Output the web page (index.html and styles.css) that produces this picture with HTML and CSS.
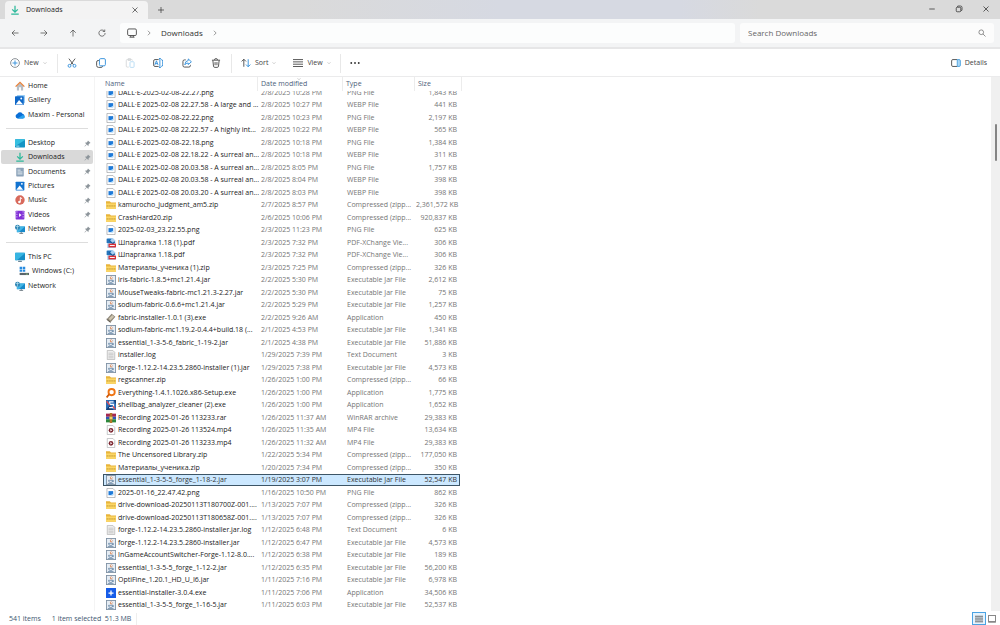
FILE: index.html
```
<!DOCTYPE html>
<html lang="en">
<head>
<meta charset="utf-8">
<title>Downloads</title>
<link rel="stylesheet" href="styles.css">
</head>
<body>
<svg class="sprite" aria-hidden="true">
  <defs>
    <symbol id="download" viewBox="0 0 16 16"><path d="M8 1v10M3.500 7 8 11.500 12.500 7M2 14.500h12" fill="none" stroke="#2bb89a" stroke-width="2"/></symbol>
    <symbol id="close" viewBox="0 0 16 16"><path d="m3 3 10 10M13 3 3 13" class="line"/></symbol>
    <symbol id="plus" viewBox="0 0 16 16"><path d="M8 2v12M2 8h12" class="line"/></symbol>
    <symbol id="minimize" viewBox="0 0 16 16"><path d="M2.500 8h11" class="line"/></symbol>
    <symbol id="restore" viewBox="0 0 16 16"><path d="M5 4V3q0-1 1-1h5q3 0 3 3v5q0 1-1 1h-1" class="line"/><rect x="2.500" y="4.500" width="9" height="9" rx="2" class="line"/></symbol>
    <symbol id="left" viewBox="0 0 16 16"><path d="M15 8H2M7.500 2.500 2 8l5.500 5.500" class="line"/></symbol>
    <symbol id="right" viewBox="0 0 16 16"><path d="M1 8h13M8.500 2.500 14 8l-5.500 5.500" class="line"/></symbol>
    <symbol id="up" viewBox="0 0 16 16"><path d="M8 15V2M2.500 7.500 8 2l5.500 5.500" class="line"/></symbol>
    <symbol id="refresh" viewBox="0 0 16 16"><path d="M13 4.500A6.200 6.200 0 1 0 14.200 8M13.500 1v4h-4" class="line"/></symbol>
    <symbol id="monitor" viewBox="0 0 16 16"><rect x="1" y="1.500" width="14" height="10.500" rx="2" class="line"/><path d="M6 12v2.500M10 12v2.500M4 14.700h8" class="line"/></symbol>
    <symbol id="chevron" viewBox="0 0 16 16"><path d="m5 2 6 6-6 6" class="line"/></symbol>
    <symbol id="caret" viewBox="0 0 16 16"><path d="m2 5 6 6 6-6" class="line"/></symbol>
    <symbol id="search" viewBox="0 0 16 16"><circle cx="6.500" cy="6.500" r="4.700" class="line"/><path d="m10 10 5 5" class="line"/></symbol>
    <symbol id="new" viewBox="0 0 16 16"><circle cx="8" cy="8" r="7" fill="none" stroke="#7b8288" stroke-width="1.400"/><path d="M8 4v8M4 8h8" class="blue"/></symbol>
    <symbol id="cut" viewBox="0 0 16 16"><path d="m3 1 7.500 10M13 1 5.500 11" class="line"/><circle cx="4" cy="12.500" r="2.300" class="blue"/><circle cx="12" cy="12.500" r="2.300" class="blue"/></symbol>
    <symbol id="copy" viewBox="0 0 16 16"><path d="M5 4H3.500Q1 4 1 6.500V12q0 3 3 3h4q2.500 0 2.500-2" class="line"/><rect x="5.500" y="1" width="9.500" height="11.500" rx="2" class="blue"/></symbol>
    <symbol id="paste" viewBox="0 0 16 16"><path d="M6 14.500H3.500Q2 14.500 2 13V4q0-1.500 1.500-1.500h7Q12 2.500 12 4M5 1h4v3H5z" fill="none" stroke="#d2d4d6" stroke-width="1.300"/><rect x="8" y="6" width="6.500" height="9" rx="1" fill="none" stroke="#b9dcf3" stroke-width="1.500"/></symbol>
    <symbol id="rename" viewBox="0 0 16 16"><path d="M9 2.500H3Q1 2.500 1 5v6q0 2.500 2 2.500h6" class="line"/><path d="M13 2.500q2.500 0 2.500 2.500v6q0 2.500-2.500 2.500M9.500.8h3M9.500 15.200h3M11 1v14M3 11l2.500-6.500L8 11M4 9h3" class="blue"/></symbol>
    <symbol id="share" viewBox="0 0 16 16"><path d="M6 3H4Q1.500 3 1.500 5.500v6.500q0 2.500 2.500 2.500h7q2.500 0 2.500-2.500v-1" class="line"/><path d="M10 1.500 15 6l-5 4.500V8q-4 0-5.500 3Q5 4.500 10 4z" class="blue"/></symbol>
    <symbol id="trash" viewBox="0 0 16 16"><path d="M1.500 3.500h13M5.500 3q0-2 2.500-2t2.500 2M3 4l1 9q.2 2 2 2h4q1.800 0 2-2l1-9M6.500 6.500v5M9.500 6.500v5" class="line"/></symbol>
    <symbol id="sort" viewBox="0 0 16 16"><path d="M4.500 14V2M1 5.500 4.500 2 8 5.500" class="line"/><path d="M11.500 2v12M8 10.500l3.500 3.500 3.500-3.500" class="blue"/></symbol>
    <symbol id="lines" viewBox="0 0 16 16"><path d="M0 2.500h16M0 6.200h16M0 9.900h16M0 13.600h16" class="line"/></symbol>
    <symbol id="dots" viewBox="0 0 16 16"><g fill="#333"><circle cx="2" cy="8" r="1.500"/><circle cx="8" cy="8" r="1.500"/><circle cx="14" cy="8" r="1.500"/></g></symbol>
    <symbol id="details" viewBox="0 0 16 16"><path d="M10 2.500H3Q1 2.500 1 4.500v7q0 2 2 2h7" class="line"/><path d="M10 2.500h3q2 0 2 2v7q0 2-2 2h-3z" fill="#a9d7f6" stroke="#3f9bdc" stroke-width="1.300"/></symbol>
    <symbol id="pin" viewBox="0 0 16 16"><path d="m9 1 6 6-2 .5-2.500 2.500-.5 4-3.500-3.500L2 15l-1-1 4.500-4.500L2 6l4-.5L8.500 3z" fill="#8d959b"/></symbol>
    <symbol id="home" viewBox="0 0 16 16"><path d="M3 7.500 8 3l5 4.500V15h-3.500v-5h-3v5H3z" fill="#b7bec5"/><path d="M1 9 8 2.200 15 9" fill="none" stroke="#e8823a" stroke-width="2.200"/></symbol>
    <symbol id="gallery" viewBox="0 0 16 16"><rect x="3" y="0" width="13" height="13" rx="1" fill="#9acdf4"/><rect x="0" y="2" width="14" height="14" rx="1" fill="#0f68c9"/><path d="m1 15 5.500-7L13 15z" fill="#fff"/><circle cx="10" cy="5.500" r="1.500" fill="#fff"/></symbol>
    <symbol id="cloud" viewBox="0 0 16 16"><path d="M4 13.500a3.800 3.800 0 0 1-.5-7.300A5 5 0 0 1 12 5.800a4 4 0 0 1 .5 7.700z" fill="#0a6fd6"/><path d="M4 13.500 12.500 8q3 .5 3.300 3-.3 2.500-3.300 2.500z" fill="#29a2ee"/></symbol>
    <symbol id="desktop" viewBox="0 0 16 16"><rect x="0" y="2" width="16" height="13" rx="1" fill="#1494c4"/><path d="M1 2h14q1 0 1 1L0 13V3q0-1 1-1z" fill="#35bfe0"/><path d="M2 13h5" stroke="#d7f5ff" stroke-width="1.200"/></symbol>
    <symbol id="documents" viewBox="0 0 16 16"><rect x="2" y="1" width="12" height="14" rx="1" fill="#8ba2b8"/><path d="M4 5h5M4 8h8M4 11h8" stroke="#e8eff5" stroke-width="1.500"/></symbol>
    <symbol id="pictures" viewBox="0 0 16 16"><rect x="1" y="1" width="14" height="14" rx="1" fill="#1273d0"/><path d="m2 14 5.500-7L13 14z" fill="#fff"/><circle cx="11" cy="4.500" r="1.500" fill="#fff"/></symbol>
    <symbol id="music" viewBox="0 0 16 16"><circle cx="8" cy="8" r="7.500" fill="#d8695b"/><path d="M8.500 11V4l3 2" fill="none" stroke="#fff" stroke-width="1.600"/><circle cx="7" cy="11" r="2" fill="#fff"/></symbol>
    <symbol id="videos" viewBox="0 0 16 16"><rect x="1" y="1" width="14" height="14" rx="1" fill="#8131d6"/><path d="M3 2v12M13 2v12" stroke="#d5b6f7" stroke-width="1.500" stroke-dasharray="2 2"/><path d="m6.500 5 4 3-4 3z" fill="#fff"/></symbol>
    <symbol id="network" viewBox="0 0 16 16"><rect x="3" y="4" width="13" height="9" fill="#1689ca"/><path d="M3 4h13L6 13H3z" fill="#42b5e5"/><path d="M7 15h6M10 13v2" stroke="#6e7b84" stroke-width="1.500"/><circle cx="4" cy="5" r="4" fill="#3187b5"/><path d="M1 4h6M4 1v8" stroke="#b9e1ef"/></symbol>
    <symbol id="pc" viewBox="0 0 16 16"><rect x="0" y="1" width="16" height="12" rx="1" fill="#158dc6"/><path d="M1 1h14q1 0 1 1L3 13H1q-1 0-1-1V2q0-1 1-1z" fill="#37b5e2"/><path d="M5 15h6" stroke="#6f8795" stroke-width="2"/></symbol>
    <symbol id="drive" viewBox="0 0 16 16"><path d="M1 1h4v4H1zM6 1h4v4H6zM1 6h4v3H1zM6 6h4v3H6z" fill="#268be0"/><path d="M1 11h15v3.500H1z" fill="#59646b"/><path d="M11 13h3" stroke="#9df27f"/></symbol>
    <symbol id="image" viewBox="0 0 16 16"><path d="M1.500.7h9.500l3.500 3.500v11.100h-13z" fill="#fff" stroke="#93979a"/><rect x="4" y="5" width="7.500" height="6.500" fill="#1f7ad8"/><path d="m8 11.500 2-2.500 1.500 1.500v1z" fill="#a7dcff"/></symbol>
    <symbol id="zip" viewBox="0 0 16 16"><path d="M0 2h6l2 2h8v10H0z" fill="#e8b43c"/><path d="M0 5.500h16V14H0z" fill="#fbd665"/><path d="M1 9.500h14" stroke="#b98b25" stroke-width="1.500" stroke-dasharray="2 1"/></symbol>
    <symbol id="pdf" viewBox="0 0 16 16"><path d="M2 0h9l4 4v12H2z" fill="#a9cff0"/><path d="M1 1h8L6 5l4 3H1z" fill="#2474bb"/><path d="m5 4 6 5 3-3" stroke="#175e9e" stroke-width="2" fill="none"/><path d="M4 9h12v6H4z" fill="#d93036"/><path d="M6 12h8" stroke="#fff" stroke-width="1.500"/></symbol>
    <symbol id="jar" viewBox="0 0 16 16"><rect x=".7" y=".7" width="14.600" height="14.600" fill="#e6edf4" stroke="#7d90a2" stroke-width="1.400"/><path d="M8.500 2q-3 2.500-.5 5M10.500 4q-2 1.500-1 3" fill="none" stroke="#df7b40" stroke-width="1.300"/><path d="M4 8.500h7q0 3.500-3.500 3.500T4 8.500M11 9q3 0 0 2M3 13.500h9" fill="none" stroke="#5e7f9f" stroke-width="1.200"/></symbol>
    <symbol id="fabric" viewBox="0 0 16 16"><path d="m1 10 8-9 6 5-8 9z" fill="#8d8678"/><path d="m4 9 6-6 3 3-6 6z" fill="#cdc4ae"/><path d="m1 10 6 5" stroke="#544f45" stroke-width="1.500"/></symbol>
    <symbol id="text" viewBox="0 0 16 16"><path d="M2 .7h9l3 3v11.600H2z" fill="#eee" stroke="#aaa"/><path d="M4 5h8M4 7.500h8M4 10h8M4 12.500h8" stroke="#b4b4b4"/></symbol>
    <symbol id="everything" viewBox="0 0 16 16"><circle cx="9" cy="6.500" r="5" fill="#fff" stroke="#ee7414" stroke-width="3"/><path d="m5 10-4 5" stroke="#d35a08" stroke-width="3"/></symbol>
    <symbol id="shellbag" viewBox="0 0 16 16"><path d="M0 0h16v16H0z" fill="#2b6db5"/><path d="m0 16 6-8 6 8zM12 0h4v7z" fill="#183f75"/><path d="M12 3H6v4h6v5H5" fill="none" stroke="#f4f8ff" stroke-width="2"/><path d="m1 2 5 6M11 10l4 5" stroke="#e24d52" stroke-width="2"/></symbol>
    <symbol id="rar" viewBox="0 0 16 16"><path d="M0 1h16v5H0z" fill="#a62851"/><path d="M0 6h16v4H0z" fill="#3157b7"/><path d="M0 10h16v5H0z" fill="#2b883c"/><path d="M6 0h4v16H6z" fill="#b37628"/><path d="M5.500 6h5v4h-5z" fill="#f4d465"/></symbol>
    <symbol id="video" viewBox="0 0 16 16"><path d="M2 .7h9l3 3v11.600H2z" fill="#fff" stroke="#a3a7aa"/><circle cx="8" cy="8.500" r="3.700" fill="#7b2530"/><path d="m7 6.500 3 2-3 2z" fill="#fff"/></symbol>
    <symbol id="essential" viewBox="0 0 16 16"><path d="M0 0h16v16H0z" fill="#165ce8"/><path d="M8 4v8M4 8h8" stroke="#fff" stroke-width="2"/></symbol>
    <symbol id="large" viewBox="0 0 16 16"><rect x="1" y="1" width="14" height="13" fill="#fff" stroke="#888" stroke-width="2"/><path d="M1 13.500h14" stroke="#888" stroke-width="3"/></symbol>
  </defs>
</svg>
<div class="window">
  <header class="titlebar">
    <div class="tab"><svg class="icon"><use href="#download"/></svg><span class="tab-title">Downloads</span><button class="plain" aria-label="Close tab"><svg class="icon small"><use href="#close"/></svg></button></div>
    <button class="plain new-tab" aria-label="New tab"><svg class="icon small"><use href="#plus"/></svg></button>
    <div class="window-buttons">
      <button class="plain" aria-label="Minimize"><svg class="icon small"><use href="#minimize"/></svg></button>
      <button class="plain" aria-label="Restore"><svg class="icon small"><use href="#restore"/></svg></button>
      <button class="plain" aria-label="Close"><svg class="icon small"><use href="#close"/></svg></button>
    </div>
  </header>
  <nav class="navbar" aria-label="Location">
    <div class="nav-buttons">
      <button class="plain" aria-label="Back"><svg class="icon small"><use href="#left"/></svg></button>
      <button class="plain" aria-label="Forward"><svg class="icon small"><use href="#right"/></svg></button>
      <button class="plain" aria-label="Up"><svg class="icon small"><use href="#up"/></svg></button>
      <button class="plain" aria-label="Refresh"><svg class="icon small"><use href="#refresh"/></svg></button>
    </div>
    <div class="address"><svg class="icon"><use href="#monitor"/></svg><svg class="icon chev"><use href="#chevron"/></svg><a class="crumb" href="#">Downloads</a><svg class="icon chev"><use href="#chevron"/></svg></div>
    <div class="search"><input type="text" aria-label="Search Downloads" placeholder="Search Downloads"><svg class="icon small"><use href="#search"/></svg></div>
  </nav>
  <div class="toolbar">
    <button class="plain tool-new"><svg class="icon"><use href="#new"/></svg>New<svg class="icon caret"><use href="#caret"/></svg></button>
    <div class="tools">
      <button class="plain" aria-label="Cut"><svg class="icon"><use href="#cut"/></svg></button>
      <button class="plain" aria-label="Copy"><svg class="icon"><use href="#copy"/></svg></button>
      <button class="plain" aria-label="Paste" disabled><svg class="icon"><use href="#paste"/></svg></button>
      <button class="plain" aria-label="Rename"><svg class="icon"><use href="#rename"/></svg></button>
      <button class="plain" aria-label="Share"><svg class="icon"><use href="#share"/></svg></button>
      <button class="plain" aria-label="Delete"><svg class="icon"><use href="#trash"/></svg></button>
    </div>
    <div class="views">
      <button class="plain"><svg class="icon"><use href="#sort"/></svg>Sort<svg class="icon caret"><use href="#caret"/></svg></button>
      <button class="plain"><svg class="icon"><use href="#lines"/></svg>View<svg class="icon caret"><use href="#caret"/></svg></button>
    </div>
    <button class="plain more" aria-label="More"><svg class="icon"><use href="#dots"/></svg></button>
    <button class="plain details"><svg class="icon"><use href="#details"/></svg>Details</button>
  </div>
  <main class="content">
    <nav class="sidebar" aria-label="Folders">
      <ul>
        <li><a href="#"><svg class="icon"><use href="#home"/></svg>Home</a></li>
        <li><a href="#"><svg class="icon"><use href="#gallery"/></svg>Gallery</a></li>
        <li><a href="#"><svg class="icon"><use href="#cloud"/></svg>Maxim - Personal</a></li>
      </ul>
      <hr>
      <ul>
        <li><a href="#"><svg class="icon"><use href="#desktop"/></svg>Desktop<svg class="icon pin"><use href="#pin"/></svg></a></li>
        <li class="current"><a href="#"><svg class="icon"><use href="#download"/></svg>Downloads<svg class="icon pin"><use href="#pin"/></svg></a></li>
        <li><a href="#"><svg class="icon"><use href="#documents"/></svg>Documents<svg class="icon pin"><use href="#pin"/></svg></a></li>
        <li><a href="#"><svg class="icon"><use href="#pictures"/></svg>Pictures<svg class="icon pin"><use href="#pin"/></svg></a></li>
        <li><a href="#"><svg class="icon"><use href="#music"/></svg>Music<svg class="icon pin"><use href="#pin"/></svg></a></li>
        <li><a href="#"><svg class="icon"><use href="#videos"/></svg>Videos<svg class="icon pin"><use href="#pin"/></svg></a></li>
        <li><a href="#"><svg class="icon"><use href="#network"/></svg>Network<svg class="icon pin"><use href="#pin"/></svg></a></li>
      </ul>
      <hr>
      <ul>
        <li><a href="#"><svg class="icon"><use href="#pc"/></svg>This PC</a></li>
        <li class="nested"><a href="#"><svg class="icon"><use href="#drive"/></svg>Windows (C:)</a></li>
        <li><a href="#"><svg class="icon"><use href="#network"/></svg>Network</a></li>
      </ul>
    </nav>
    <div class="listing">
      <table class="files">
        <thead><tr><th>Name</th><th class="sorted">Date modified<svg class="icon caret"><use href="#caret"/></svg></th><th>Type</th><th>Size</th></tr></thead>
        <tbody>
<tr><td><svg class="icon"><use href="#image"/></svg><span>DALL·E-2025-02-08-22.27.png</span></td><td>2/8/2025 10:28 PM</td><td>PNG File</td><td>1,843 KB</td></tr>
<tr><td><svg class="icon"><use href="#image"/></svg><span>DALL·E 2025-02-08 22.27.58 - A large and ...</span></td><td>2/8/2025 10:27 PM</td><td>WEBP File</td><td>441 KB</td></tr>
<tr><td><svg class="icon"><use href="#image"/></svg><span>DALL·E-2025-02-08-22.22.png</span></td><td>2/8/2025 10:23 PM</td><td>PNG File</td><td>2,197 KB</td></tr>
<tr><td><svg class="icon"><use href="#image"/></svg><span>DALL·E 2025-02-08 22.22.57 - A highly int...</span></td><td>2/8/2025 10:22 PM</td><td>WEBP File</td><td>565 KB</td></tr>
<tr><td><svg class="icon"><use href="#image"/></svg><span>DALL·E-2025-02-08-22.18.png</span></td><td>2/8/2025 10:18 PM</td><td>PNG File</td><td>1,384 KB</td></tr>
<tr><td><svg class="icon"><use href="#image"/></svg><span>DALL·E 2025-02-08 22.18.22 - A surreal an...</span></td><td>2/8/2025 10:18 PM</td><td>WEBP File</td><td>311 KB</td></tr>
<tr><td><svg class="icon"><use href="#image"/></svg><span>DALL·E 2025-02-08 20.03.58 - A surreal an...</span></td><td>2/8/2025 8:05 PM</td><td>PNG File</td><td>1,757 KB</td></tr>
<tr><td><svg class="icon"><use href="#image"/></svg><span>DALL·E 2025-02-08 20.03.58 - A surreal an...</span></td><td>2/8/2025 8:04 PM</td><td>WEBP File</td><td>398 KB</td></tr>
<tr><td><svg class="icon"><use href="#image"/></svg><span>DALL·E 2025-02-08 20.03.20 - A surreal an...</span></td><td>2/8/2025 8:03 PM</td><td>WEBP File</td><td>398 KB</td></tr>
<tr><td><svg class="icon"><use href="#zip"/></svg><span>kamurocho_judgment_am5.zip</span></td><td>2/7/2025 8:57 PM</td><td>Compressed (zipp...</td><td>2,361,572 KB</td></tr>
<tr><td><svg class="icon"><use href="#zip"/></svg><span>CrashHard20.zip</span></td><td>2/6/2025 10:06 PM</td><td>Compressed (zipp...</td><td>920,837 KB</td></tr>
<tr><td><svg class="icon"><use href="#image"/></svg><span>2025-02-03_23.22.55.png</span></td><td>2/3/2025 11:23 PM</td><td>PNG File</td><td>625 KB</td></tr>
<tr><td><svg class="icon"><use href="#pdf"/></svg><span>Шпаргалка 1.18 (1).pdf</span></td><td>2/3/2025 7:32 PM</td><td>PDF-XChange Vie...</td><td>306 KB</td></tr>
<tr><td><svg class="icon"><use href="#pdf"/></svg><span>Шпаргалка 1.18.pdf</span></td><td>2/3/2025 7:32 PM</td><td>PDF-XChange Vie...</td><td>306 KB</td></tr>
<tr><td><svg class="icon"><use href="#zip"/></svg><span>Материалы_ученика (1).zip</span></td><td>2/3/2025 7:25 PM</td><td>Compressed (zipp...</td><td>326 KB</td></tr>
<tr><td><svg class="icon"><use href="#jar"/></svg><span>iris-fabric-1.8.5+mc1.21.4.jar</span></td><td>2/2/2025 5:30 PM</td><td>Executable Jar File</td><td>2,612 KB</td></tr>
<tr><td><svg class="icon"><use href="#jar"/></svg><span>MouseTweaks-fabric-mc1.21.3-2.27.jar</span></td><td>2/2/2025 5:30 PM</td><td>Executable Jar File</td><td>75 KB</td></tr>
<tr><td><svg class="icon"><use href="#jar"/></svg><span>sodium-fabric-0.6.6+mc1.21.4.jar</span></td><td>2/2/2025 5:29 PM</td><td>Executable Jar File</td><td>1,257 KB</td></tr>
<tr><td><svg class="icon"><use href="#fabric"/></svg><span>fabric-installer-1.0.1 (3).exe</span></td><td>2/2/2025 9:26 AM</td><td>Application</td><td>450 KB</td></tr>
<tr><td><svg class="icon"><use href="#jar"/></svg><span>sodium-fabric-mc1.19.2-0.4.4+build.18 (...</span></td><td>2/1/2025 4:53 PM</td><td>Executable Jar File</td><td>1,341 KB</td></tr>
<tr><td><svg class="icon"><use href="#jar"/></svg><span>essential_1-3-5-6_fabric_1-19-2.jar</span></td><td>2/1/2025 4:38 PM</td><td>Executable Jar File</td><td>51,886 KB</td></tr>
<tr><td><svg class="icon"><use href="#text"/></svg><span>installer.log</span></td><td>1/29/2025 7:39 PM</td><td>Text Document</td><td>3 KB</td></tr>
<tr><td><svg class="icon"><use href="#jar"/></svg><span>forge-1.12.2-14.23.5.2860-installer (1).jar</span></td><td>1/29/2025 7:38 PM</td><td>Executable Jar File</td><td>4,573 KB</td></tr>
<tr><td><svg class="icon"><use href="#zip"/></svg><span>regscanner.zip</span></td><td>1/26/2025 1:00 PM</td><td>Compressed (zipp...</td><td>66 KB</td></tr>
<tr><td><svg class="icon"><use href="#everything"/></svg><span>Everything-1.4.1.1026.x86-Setup.exe</span></td><td>1/26/2025 1:00 PM</td><td>Application</td><td>1,775 KB</td></tr>
<tr><td><svg class="icon"><use href="#shellbag"/></svg><span>shellbag_analyzer_cleaner (2).exe</span></td><td>1/26/2025 1:00 PM</td><td>Application</td><td>1,652 KB</td></tr>
<tr><td><svg class="icon"><use href="#rar"/></svg><span>Recording 2025-01-26 113233.rar</span></td><td>1/26/2025 11:37 AM</td><td>WinRAR archive</td><td>29,383 KB</td></tr>
<tr><td><svg class="icon"><use href="#video"/></svg><span>Recording 2025-01-26 113524.mp4</span></td><td>1/26/2025 11:35 AM</td><td>MP4 File</td><td>13,634 KB</td></tr>
<tr><td><svg class="icon"><use href="#video"/></svg><span>Recording 2025-01-26 113233.mp4</span></td><td>1/26/2025 11:32 AM</td><td>MP4 File</td><td>29,383 KB</td></tr>
<tr><td><svg class="icon"><use href="#zip"/></svg><span>The Uncensored Library.zip</span></td><td>1/22/2025 5:34 PM</td><td>Compressed (zipp...</td><td>177,050 KB</td></tr>
<tr><td><svg class="icon"><use href="#zip"/></svg><span>Материалы_ученика.zip</span></td><td>1/20/2025 7:34 PM</td><td>Compressed (zipp...</td><td>350 KB</td></tr>
<tr class="selected"><td><svg class="icon"><use href="#jar"/></svg><span>essential_1-3-5-5_forge_1-18-2.jar</span></td><td>1/19/2025 3:07 PM</td><td>Executable Jar File</td><td>52,547 KB</td></tr>
<tr><td><svg class="icon"><use href="#image"/></svg><span>2025-01-16_22.47.42.png</span></td><td>1/16/2025 10:50 PM</td><td>PNG File</td><td>862 KB</td></tr>
<tr><td><svg class="icon"><use href="#zip"/></svg><span>drive-download-20250113T180700Z-001....</span></td><td>1/13/2025 7:07 PM</td><td>Compressed (zipp...</td><td>326 KB</td></tr>
<tr><td><svg class="icon"><use href="#zip"/></svg><span>drive-download-20250113T180658Z-001....</span></td><td>1/13/2025 7:07 PM</td><td>Compressed (zipp...</td><td>326 KB</td></tr>
<tr><td><svg class="icon"><use href="#text"/></svg><span>forge-1.12.2-14.23.5.2860-installer.jar.log</span></td><td>1/12/2025 6:48 PM</td><td>Text Document</td><td>6 KB</td></tr>
<tr><td><svg class="icon"><use href="#jar"/></svg><span>forge-1.12.2-14.23.5.2860-installer.jar</span></td><td>1/12/2025 6:47 PM</td><td>Executable Jar File</td><td>4,573 KB</td></tr>
<tr><td><svg class="icon"><use href="#jar"/></svg><span>InGameAccountSwitcher-Forge-1.12-8.0....</span></td><td>1/12/2025 6:38 PM</td><td>Executable Jar File</td><td>189 KB</td></tr>
<tr><td><svg class="icon"><use href="#jar"/></svg><span>essential_1-3-5-5_forge_1-12-2.jar</span></td><td>1/12/2025 6:35 PM</td><td>Executable Jar File</td><td>56,200 KB</td></tr>
<tr><td><svg class="icon"><use href="#jar"/></svg><span>OptiFine_1.20.1_HD_U_I6.jar</span></td><td>1/11/2025 7:16 PM</td><td>Executable Jar File</td><td>6,978 KB</td></tr>
<tr><td><svg class="icon"><use href="#essential"/></svg><span>essential-installer-3.0.4.exe</span></td><td>1/11/2025 7:06 PM</td><td>Application</td><td>34,506 KB</td></tr>
<tr><td><svg class="icon"><use href="#jar"/></svg><span>essential_1-3-5-5_forge_1-16-5.jar</span></td><td>1/11/2025 6:03 PM</td><td>Executable Jar File</td><td>52,537 KB</td></tr>
        </tbody>
      </table>
    </div>
    <div class="scrollbar"><div class="thumb"></div></div>
  </main>
  <footer class="statusbar">
    <span>541 items</span><span class="picked">1 item selected&nbsp; 51.3 MB</span>
    <div class="modes"><button class="plain active" aria-label="Details view"><svg class="icon small"><use href="#lines"/></svg></button><button class="plain" aria-label="Large icons"><svg class="icon small"><use href="#large"/></svg></button></div>
  </footer>
</div>
</body>
</html>
```
FILE: styles.css
```
* { box-sizing: border-box; }
body { margin: 0; font: 7px/12px "Open Sans", "Noto Sans", sans-serif; color: #222; background: #fff; }
a { color: inherit; text-decoration: none; }
.sprite { position: absolute; width: 0; height: 0; }
.line { fill: none; stroke: currentColor; stroke-width: 1.4; }
.blue { fill: none; stroke: #3591dc; stroke-width: 1.5; }
.icon { width: 10px; height: 10px; flex: none; display: block; }
.icon.small { width: 8px; height: 8px; }
.icon.chev { width: 6px; height: 6px; }
.icon.caret { width: 4px; height: 4px; color: #777; }
.plain { display: flex; align-items: center; justify-content: center; gap: 4px; margin: 0; padding: 0; border: 0; background: none; font: inherit; color: #333; }

.window { display: flex; flex-direction: column; height: 100vh; overflow: hidden; }

.titlebar { display: flex; flex: none; height: 19px; padding: 1px 1px 0 5px; background: linear-gradient(90deg, #dadada 30%, #d6d9e2 50%, #d6d9e2 68%, #dadada 76%); }
.tab { display: flex; align-items: center; width: 143px; padding: 0 9px 0 5px; background: #f3f3f3; border-radius: 4px 4px 0 0; }
.tab-title { flex: 1; margin-left: 6px; }
.new-tab { width: 26px; }
.window-buttons { display: flex; margin-left: auto; padding-bottom: 2px; }
.window-buttons .plain { width: 27px; color: #222; }

.navbar { display: flex; align-items: center; flex: none; height: 30px; padding: 0 6px 0 1px; background: #f3f4f5; border-bottom: 2px solid #e6e6e7; font-size: 8px; }
.nav-buttons { display: flex; width: 119px; padding-right: 4px; }
.nav-buttons .plain { flex: 1; color: #444; }
.address { display: flex; align-items: center; gap: 9px; flex: 1; height: 20px; padding-left: 7px; background: #fcfdfd; border-radius: 3px; color: #444; }
.address .crumb { color: #333; }
.search { display: flex; align-items: center; width: 254px; height: 20px; margin-left: 5px; padding: 0 8px; background: #fcfcfc; border-radius: 3px; color: #666; }
.search input { flex: 1; min-width: 0; padding: 0; border: 0; outline: 0; background: none; font: inherit; }
.search input::placeholder { color: #666; opacity: 1; }

.toolbar { display: flex; align-items: center; flex: none; height: 28px; padding-top: 1px; border-bottom: 1px solid #ebebec; }
.toolbar .plain { color: #444; }
.toolbar .tool-new { padding-left: 10px; width: 57px; justify-content: flex-start; }
.tools { display: flex; height: 19px; width: 175px; padding-right: 1px; border: solid #e8e8e8; border-width: 0 1px; }
.tools .plain { flex: 1; }
.views { display: flex; gap: 17px; height: 19px; width: 109px; padding-left: 9px; border-right: 1px solid #e8e8e8; }
.toolbar .more { width: 28px; }
.toolbar .details { margin-left: auto; padding-right: 13px; }

.content { display: flex; flex: 1; min-height: 0; }
.sidebar { flex: none; width: 95px; padding: 2px 1px 0; border-right: 1px solid #f4f4f4; }
.sidebar ul { margin: 0; padding: 0; list-style: none; }
.sidebar li { height: 14px; }
.sidebar li:nth-child(3n) { height: 15px; }
.sidebar li a { display: flex; align-items: center; gap: 3px; height: 100%; padding: 0 2px 0 14px; }
.sidebar .nested a { padding-left: 18px; }
.sidebar .current { background: #d9d9d9; border-radius: 2px; }
.sidebar .pin { width: 7px; height: 7px; margin-left: auto; }
.sidebar hr { height: 1px; margin: 6px 5px 7px; border: 0; background: #ddd; }

.listing { flex: 1; min-width: 0; overflow: hidden; padding-left: 8px; }
.files, .files thead, .files tbody { display: block; }
.files thead { position: relative; z-index: 1; background: #fff; }
.files tr { display: grid; grid-template-columns: 155px 85px 72px 47px; height: 12px; }
.files tbody { margin-top: -5px; }
.files tbody tr { border: 1px solid transparent; align-items: center; }
.files tbody tr:nth-child(odd) { height: 13px; }
.files thead tr { height: 14px; }
.files th { padding: 1px 0 0 3px; border-right: 1px solid #ececec; font-weight: 400; text-align: left; color: #4c607a; }
.files th:first-child { padding-left: 2px; }
.sorted { position: relative; }
.sorted .caret { position: absolute; top: 0; left: 46%; }
.files td { padding: 0 0 0 3px; white-space: nowrap; overflow: hidden; color: #757575; line-height: 10px; }
.files td:first-child { display: flex; align-items: center; gap: 2px; padding-left: 2px; color: #222; }
.files td:nth-child(2) { padding-left: 2px; }
.files td:last-child { padding-right: 6px; padding-left: 0; text-align: right; }
.files tbody .selected { width: 357px; background: #cce8ff; border-color: #3d5566; }
.files .selected td { color: #333; }
.scrollbar { flex: none; width: 9px; padding: 47px 3px 0 4px; background: #f0f0f0; }
.thumb { height: 37px; border-radius: 1px; background: #858585; }

.statusbar { display: flex; align-items: center; flex: none; height: 14px; padding: 1px 4px 0 9px; color: #40566f; }
.picked { margin-left: 11px; padding-right: 5px; border-right: 1px solid #eee; }
.modes { display: flex; gap: 2px; height: 100%; margin-left: auto; color: #666; }
.modes .active { width: 14px; border: 1px solid #4ba3e3; background: #e5f3fd; }
```
